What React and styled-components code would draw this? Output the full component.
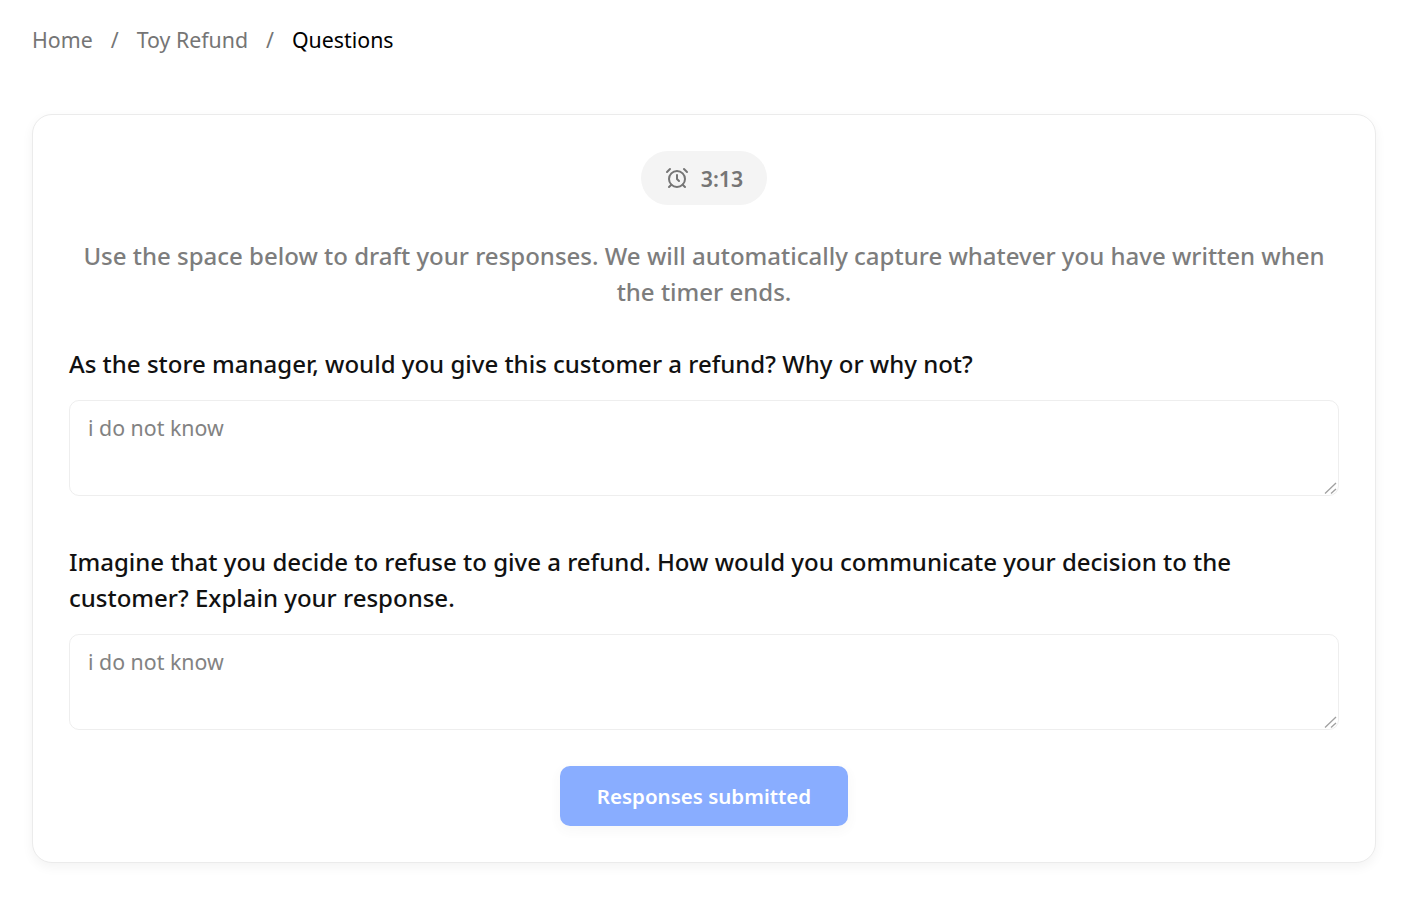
import styled, { createGlobalStyle } from "styled-components";

const GlobalStyle = createGlobalStyle`
  * {
    box-sizing: border-box;
  }
  html {
    background: #fff;
  }
  body {
    margin: 0;
    background: #fff;
    font-family: "Noto Sans", sans-serif;
    color: #000;
  }
`;

const Page = styled.div`
  width: 1408px;
  padding: 21px 32px 36px;
`;

const Breadcrumbs = styled.nav`
  display: flex;
  align-items: center;
  gap: 18px;
  height: 36px;
  margin-bottom: 57px;
  font-size: 21.33px;
  color: #757575;
`;

const Crumb = styled.span`
  color: ${(props) => (props.$current ? "#000" : "#757575")};
`;

const Card = styled.main`
  display: flex;
  flex-direction: column;
  padding: 36px;
  background: #fff;
  border: 1px solid #ebebeb;
  border-radius: 20px;
  box-shadow: 0 4px 12px rgba(0, 0, 0, 0.05);
`;

const Timer = styled.div`
  display: flex;
  align-self: center;
  align-items: center;
  gap: 12px;
  height: 54px;
  padding: 0 24px;
  margin-bottom: 33px;
  border-radius: 27px;
  background: #f4f4f4;
  color: #757575;
  font-size: 21.33px;
  font-weight: 600;
`;

const Intro = styled.p`
  margin: 0 0 36px;
  font-size: 24px;
  font-weight: 500;
  line-height: 36px;
  text-align: center;
  color: #7d7d7d;
`;

const Question = styled.label`
  display: block;
  margin-bottom: 18px;
  font-size: 24px;
  font-weight: 500;
  line-height: 36px;
  color: #111;
`;

const AnswerField = styled.div`
  position: relative;
  margin-bottom: ${(props) => props.$gap}px;
`;

const Answer = styled.textarea`
  display: block;
  width: 100%;
  height: 96px;
  padding: 12px 18px;
  border: 1px solid #ededed;
  border-radius: 10px;
  font-family: inherit;
  font-size: 21.33px;
  line-height: 30px;
  background: #fff;
  color: #757575;
  opacity: 0.9;
  outline: none;
  resize: none;
`;

const Grip = styled.svg`
  position: absolute;
  right: 1px;
  bottom: 1px;
  pointer-events: none;
`;

const Submit = styled.button`
  align-self: center;
  width: 288px;
  height: 60px;
  border: none;
  border-radius: 10px;
  background: #155dff;
  color: #fff;
  opacity: 0.5;
  font-family: inherit;
  font-size: 20.5px;
  font-weight: 600;
  box-shadow: 0 4px 12px rgba(0, 0, 0, 0.06);
`;

const AlarmIcon = () => (
  <svg width="24" height="24" viewBox="0 0 24 24" fill="none" stroke="currentColor" strokeWidth="2" strokeLinecap="round" strokeLinejoin="round">
    <circle cx="12" cy="13" r="8" />
    <path d="M12 9v4l2 2" />
    <path d="M5 3 2 6" />
    <path d="m22 6-3-3" />
    <path d="M6.38 18.7 4 21" />
    <path d="M17.64 18.67 20 21" />
  </svg>
);

const ResizeGrip = () => (
  <Grip width="14" height="14" viewBox="0 0 14 14" fill="none" stroke="#a0a0a0" strokeWidth="1.3">
    <path d="M1 12.5 12 2" />
    <path d="M7 12.5 12 8" />
  </Grip>
);

export default function App() {
  return (
    <Page>
      <GlobalStyle />
      <Breadcrumbs>
        <Crumb>Home</Crumb>
        <span>/</span>
        <Crumb>Toy Refund</Crumb>
        <span>/</span>
        <Crumb $current>Questions</Crumb>
      </Breadcrumbs>
      <Card>
        <Timer>
          <AlarmIcon />
          3:13
        </Timer>
        <Intro>
          Use the space below to draft your responses. We will automatically capture whatever you have written when the timer ends.
        </Intro>
        <Question htmlFor="q1">As the store manager, would you give this customer a refund? Why or why not?</Question>
        <AnswerField $gap={48}>
          <Answer id="q1" defaultValue="i do not know" />
          <ResizeGrip />
        </AnswerField>
        <Question htmlFor="q2">
          Imagine that you decide to refuse to give a refund. How would you communicate your decision to the customer? Explain your response.
        </Question>
        <AnswerField $gap={36}>
          <Answer id="q2" defaultValue="i do not know" />
          <ResizeGrip />
        </AnswerField>
        <Submit>Responses submitted</Submit>
      </Card>
    </Page>
  );
}
